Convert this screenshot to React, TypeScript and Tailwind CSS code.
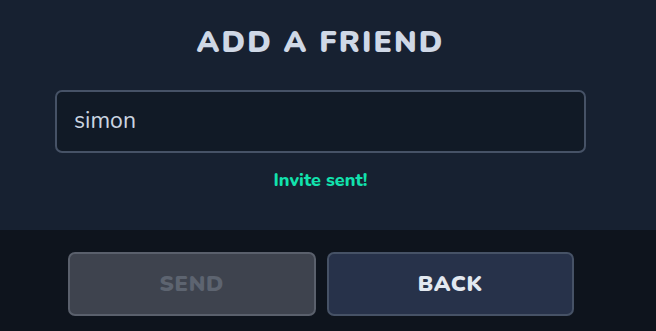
export default function App() {
  return (
    <div
      className="w-[656px] h-[331px] flex flex-col overflow-hidden"
      style={{ fontFamily: '"Nunito", "Noto Sans", Lato, sans-serif' }}
    >
      <div className="h-[230px] bg-[#172131] flex flex-col items-center pl-[55px] pr-[70px] pt-[24px]">
        <h1 className="text-[30px] leading-[38px] font-black tracking-[0.07em] text-[#cfd8e6]">
          ADD A FRIEND
        </h1>
        <div className="mt-[28px] w-full h-[63px] rounded-[7px] border-2 border-[#465266] bg-[#111a26] flex items-center px-[17px]">
          <span className="text-[23px] text-[#cbd5e1]">simon</span>
        </div>
        <p className="mt-[14px] text-[18px] leading-[26px] font-extrabold text-[#12e2ad]">Invite sent!</p>
      </div>
      <div className="flex-1 bg-[#0e141d] flex gap-[11px] pl-[68px] pr-[82px] pt-[22px]">
        <button className="flex-1 h-[64px] rounded-[7px] border-2 border-[#5a606c] bg-[#3e434e] text-[22px] font-black tracking-[0.03em] text-[#5d6470]">
          SEND
        </button>
        <button className="flex-1 h-[64px] rounded-[7px] border-2 border-[#465266] bg-[#27324a] text-[22px] font-black tracking-[0.03em] text-[#e2e8f0]">
          BACK
        </button>
      </div>
    </div>
  );
}
